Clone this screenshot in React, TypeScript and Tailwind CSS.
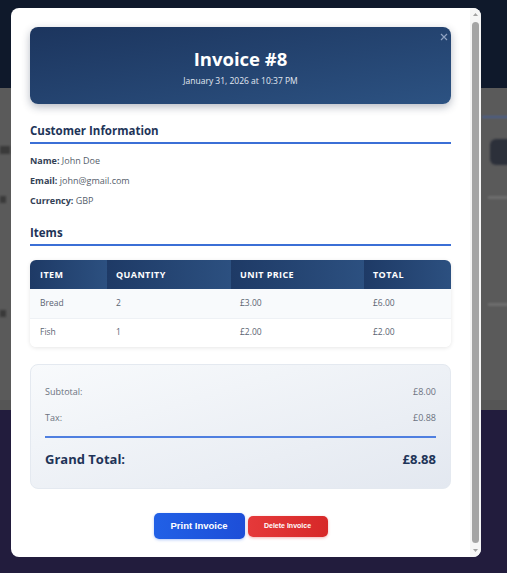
import React from 'react'

const items = [
  { name: 'Bread', qty: 2, price: '£3.00', total: '£6.00' },
  { name: 'Fish', qty: 1, price: '£2.00', total: '£2.00' },
]

function Backdrop() {
  return (
    <div className="flex h-[573px] flex-col">
      <div className="h-[88px] bg-[#0f192b]" />
      <div className="relative h-[322px] overflow-hidden bg-[#5a5a5a]">
        <div className="absolute left-[482px] top-[28px] h-[2px] w-[40px] bg-[#4a5f8c] blur-[1px]" />
        <div className="absolute left-[490px] top-[51px] h-[26px] w-[40px] rounded-md bg-[#2c303a] blur-[1px]" />
        <div className="absolute left-[488px] top-[108px] h-[3px] w-[20px] bg-[#6e6e6e] blur-[1px]" />
        <div className="absolute left-[488px] top-[215px] h-[3px] w-[20px] bg-[#6e6e6e] blur-[1px]" />
        <div className="absolute left-0 top-[58px] h-[8px] w-[10px] bg-[#3a3a3a] blur-[1px]" />
        <div className="absolute left-0 top-[108px] h-[7px] w-[6px] bg-[#3a3a3a] blur-[1px]" />
        <div className="absolute left-0 top-[222px] h-[7px] w-[6px] bg-[#3a3a3a] blur-[1px]" />
        <div className="absolute left-0 top-[312px] h-[10px] w-[507px] bg-[#555]" />
      </div>
      <div className="flex-1 bg-[#221c3d]" />
    </div>
  )
}

// classic scrollbar look, the headless browser hides native ones
function ScrollTrack() {
  return (
    <div className="flex w-[11px] shrink-0 flex-col items-center bg-[#f6f6f6]">
      <svg width="7" height="12" viewBox="0 0 7 12" className="shrink-0">
        <path d="M1 8 L3.5 5 L6 8 Z" fill="#a3a3a3" />
      </svg>
      <div className="my-[2px] w-[7px] flex-1 rounded-full bg-[#a5a5a5]" />
      <svg width="7" height="12" viewBox="0 0 7 12" className="shrink-0">
        <path d="M1 4 L3.5 7 L6 4 Z" fill="#a3a3a3" />
      </svg>
    </div>
  )
}

export default function App() {
  return (
    <div className="relative h-[573px] w-[507px] overflow-hidden font-['Open_Sans',sans-serif]">
      <Backdrop />
      <div className="absolute left-[11px] top-[8px] flex h-[549px] w-[470px] overflow-hidden rounded-lg bg-white">
        <div className="flex-1 px-[19px] pt-[19px]">
          <div className="relative flex h-[77px] flex-col items-center justify-center rounded-lg bg-gradient-to-br from-[#1c355e] to-[#2c5282] shadow-[0_3px_8px_rgba(15,30,60,0.3)]">
            <button className="absolute right-[3px] top-[6px] p-[0px]">
              <svg width="8" height="8" viewBox="0 0 8 8">
                <path d="M1 1 L7 7 M7 1 L1 7" stroke="#8ea2c2" strokeWidth="1.2" />
              </svg>
            </button>
            <h1 className="mt-[2px] text-[18.5px] font-bold leading-[24px] text-white">Invoice #8</h1>
            <p className="mt-[4px] text-[8.5px] leading-[12px] text-[#e3e9f2]">January 31, 2026 at 10:37 PM</p>
          </div>

          <h2 className="mt-[19px] border-b-2 border-[#3b6fd6] pb-[3px] text-[11.5px] font-bold leading-[16px] text-[#1e3458]">
            Customer Information
          </h2>
          <div className="mt-[10px] flex flex-col gap-[7px] text-[9px] leading-[13px] text-[#555e6b]">
            <p><span className="font-bold text-[#334155]">Name:</span> John Doe</p>
            <p><span className="font-bold text-[#334155]">Email:</span> john@gmail.com</p>
            <p><span className="font-bold text-[#334155]">Currency:</span> GBP</p>
          </div>

          <h2 className="mt-[18px] border-b-2 border-[#3b6fd6] pb-[3px] text-[11.5px] font-bold leading-[16px] text-[#1e3458]">
            Items
          </h2>
          <div className="mt-[14px] overflow-hidden rounded-md shadow-[0_1px_4px_rgba(0,0,0,0.1)]">
            <table className="w-full border-collapse text-left">
              <thead>
                <tr className="h-[29px] text-[9px] font-bold uppercase tracking-[0.4px] text-white">
                  <th className="w-[77px] bg-gradient-to-r from-[#1e3a66] to-[#2c5080] pl-[10px]">Item</th>
                  <th className="w-[124px] bg-gradient-to-r from-[#1e3a66] to-[#2c5080] pl-[9px]">Quantity</th>
                  <th className="w-[133px] bg-gradient-to-r from-[#1e3a66] to-[#2c5080] pl-[9px]">Unit Price</th>
                  <th className="bg-gradient-to-r from-[#1e3a66] to-[#2c5080] pl-[9px]">Total</th>
                </tr>
              </thead>
              <tbody className="text-[8.5px] text-[#5b6472]">
                {items.map((it, i) => (
                  <tr key={it.name} className={`h-[29px] ${i === 0 ? 'border-b border-[#eef1f5] bg-[#f8fafc]' : 'bg-white'}`}>
                    <td className="pl-[10px]">{it.name}</td>
                    <td className="pl-[9px]">{it.qty}</td>
                    <td className="pl-[9px]">{it.price}</td>
                    <td className="pl-[9px]">{it.total}</td>
                  </tr>
                ))}
              </tbody>
            </table>
          </div>

          <div className="mt-[17px] rounded-lg border border-[#e4e9f0] bg-gradient-to-br from-[#f8fafc] to-[#e3e8f0] px-[14px] pt-[20px] pb-[19px]">
            <div className="flex justify-between text-[9px] leading-[14px] text-[#6b7280]">
              <span>Subtotal:</span>
              <span>£8.00</span>
            </div>
            <div className="mt-[12px] flex justify-between text-[9px] leading-[14px] text-[#6b7280]">
              <span>Tax:</span>
              <span>£0.88</span>
            </div>
            <div className="mt-[11px] border-t-2 border-[#4f7fe0] pt-[11px]">
              <div className="flex justify-between text-[13px] font-bold leading-[20px] text-[#1e3458]">
                <span>Grand Total:</span>
                <span>£8.88</span>
              </div>
            </div>
          </div>

          <div className="mt-[24px] flex items-center justify-center gap-[3px] font-['Liberation_Sans',Arial,sans-serif]">
            <button className="h-[26px] w-[91px] rounded-[5px] bg-gradient-to-r from-[#2160e6] to-[#1d4ed8] text-[9.5px] font-bold text-white shadow-[0_1px_3px_rgba(37,99,235,0.35)]">
              Print Invoice
            </button>
            <button className="h-[21px] w-[80px] rounded-[5px] bg-gradient-to-r from-[#e5393a] to-[#d72828] text-[7px] font-bold text-white shadow-[0_1px_3px_rgba(220,38,38,0.35)]">
              Delete Invoice
            </button>
          </div>
        </div>
        <ScrollTrack />
      </div>
    </div>
  )
}
